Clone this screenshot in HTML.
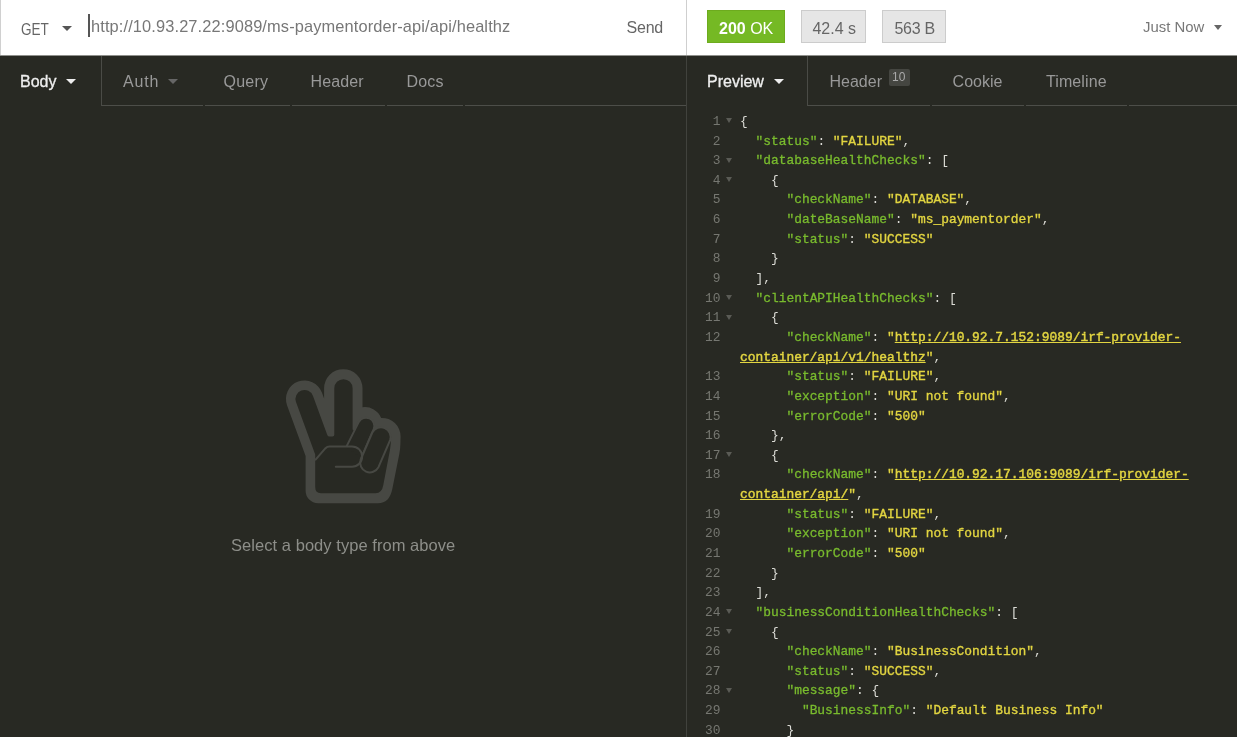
<!DOCTYPE html>
<html lang="en">
<head>
<meta charset="utf-8">
<title>Insomnia</title>
<style>
*{box-sizing:border-box;margin:0;padding:0}
html,body{width:1237px;height:737px;overflow:hidden;background:#282923;font-family:"Liberation Sans",sans-serif}
.abs{position:absolute}
#top{position:absolute;left:0;top:0;width:1237px;height:55px;background:#fff}
#topline{position:absolute;left:0;top:55px;width:1237px;height:1px;background:#8f908c}
#leftedge{position:absolute;left:0;top:0;width:1px;height:55px;background:#d0d0d0}
#vdiv1{position:absolute;left:686px;top:0;width:1px;height:55px;background:#cfcfcf}
#vdiv2{position:absolute;left:686px;top:56px;width:1px;height:681px;background:#41423d}
.t{position:absolute;white-space:nowrap;line-height:1;transform-origin:0 0;filter:blur(.4px)}
.caret{position:absolute;width:0;height:0;border-left:5px solid transparent;border-right:5px solid transparent;border-top:5.5px solid #555}
.tabline{position:absolute;height:1px;background:#4d4e49;top:104.5px}
.badge{position:absolute;top:10px;height:32px}
.gb{background:#e6e6e6;border:1px solid #cccccc;height:32.5px}
/* code */
#code{filter:blur(.4px);position:absolute;left:687px;top:111.9px;width:550px;font-family:"Liberation Mono",monospace;font-size:12.9px;color:#e0e0dc}
.row{position:relative;height:19.655px;line-height:19.655px;white-space:pre}
.ln{position:absolute;left:0;width:33.5px;text-align:right;color:#767771}
.fold{position:absolute;left:39px;top:6.5px;width:0;height:0;border-left:3px solid transparent;border-right:3px solid transparent;border-top:5px solid #5a5b55}
.tx{position:absolute;left:53px}
.k{color:#79bb2e;-webkit-text-stroke:.3px #79bb2e}
.s{color:#e2d541;-webkit-text-stroke:.35px #e2d541}
.u{color:#e2d541;text-decoration:underline;-webkit-text-stroke:.45px #e2d541}
.p{color:#dcdcd6}
</style>
</head>
<body>
<div id="top"></div>
<div id="topline"></div>
<div id="leftedge"></div>
<div id="vdiv1"></div>
<div id="vdiv2"></div>

<!-- URL bar -->
<div class="t" id="get" style="left:20.5px;top:20.5px;font-size:16.5px;color:#666;transform:scaleX(.82)">GET</div>
<div class="caret" style="left:61.5px;top:25.5px"></div>
<div class="abs" style="left:88px;top:14px;width:2px;height:23px;background:#555"></div>
<div class="t" id="url" style="left:91px;top:17.5px;font-size:16.4px;letter-spacing:.12px;color:#777">http://10.93.27.22:9089/ms-paymentorder-api/api/healthz</div>
<div class="t" id="send" style="left:626.5px;top:20px;letter-spacing:-.2px;font-size:16px;color:#666">Send</div>

<!-- response bar -->
<div class="badge" style="left:707px;width:78px;height:33px;background:#75b924;border:1px solid #6dab1e"></div>
<div class="t" id="ok" style="left:719px;top:20.5px;font-size:16px;color:#fff"><b>200</b> OK</div>
<div class="badge gb" style="left:801px;width:65px"></div>
<div class="t" id="time" style="left:812.4px;top:20.5px;font-size:16px;color:#666">42.4 s</div>
<div class="badge gb" style="left:882px;width:64px"></div>
<div class="t" id="size" style="left:894.5px;top:20.5px;letter-spacing:-.3px;font-size:16px;color:#666">563 B</div>
<div class="t" id="just" style="left:1143px;top:20px;font-size:14.9px;color:#777">Just Now</div>
<div class="caret" style="left:1214px;top:24.5px;border-left-width:4.5px;border-right-width:4.5px;border-top-color:#666"></div>

<!-- left tabs -->
<div class="abs" style="left:101.3px;top:56px;width:1px;height:49.5px;background:#4a4b46"></div>
<div class="tabline" style="left:102px;width:101px"></div>
<div class="tabline" style="left:205px;width:85px"></div>
<div class="tabline" style="left:292px;width:93px"></div>
<div class="tabline" style="left:387px;width:76px"></div>
<div class="tabline" style="left:465px;width:221px"></div>
<div class="t" id="tbody" style="-webkit-text-stroke:.3px #eee;left:20px;top:74px;font-size:16px;color:#eee">Body</div>
<div class="caret" style="left:66px;top:78.5px;border-top-color:#eee"></div>
<div class="t" id="tauth" style="left:123px;top:73.7px;letter-spacing:.8px;font-size:16px;color:#999">Auth</div>
<div class="caret" style="left:167.5px;top:78.5px;border-top-color:#666"></div>
<div class="t" id="tquery" style="left:223.6px;top:73.7px;letter-spacing:.2px;font-size:16px;color:#999">Query</div>
<div class="t" id="thead" style="left:310.5px;top:73.7px;letter-spacing:.1px;font-size:16px;color:#999">Header</div>
<div class="t" id="tdocs" style="left:406.4px;top:73.7px;letter-spacing:.2px;font-size:16px;color:#999">Docs</div>

<!-- right tabs -->
<div class="abs" style="left:807.4px;top:56px;width:1px;height:49.5px;background:#4a4b46"></div>
<div class="tabline" style="left:808px;width:122px"></div>
<div class="tabline" style="left:932px;width:92px"></div>
<div class="tabline" style="left:1026px;width:101px"></div>
<div class="tabline" style="left:1129px;width:108px"></div>
<div class="t" id="tprev" style="-webkit-text-stroke:.3px #eee;left:707px;top:73.7px;font-size:16px;color:#eee">Preview</div>
<div class="caret" style="left:773.5px;top:78.5px;border-top-color:#eee"></div>
<div class="t" id="thead2" style="left:829.5px;top:73.7px;font-size:16px;color:#999">Header</div>
<div class="abs" style="left:888.5px;top:68.5px;width:21.5px;height:17.5px;background:#454641;border-radius:2px"></div>
<div class="t" id="t10" style="left:892px;top:71px;font-size:12px;color:#aaa">10</div>
<div class="t" id="tcook" style="left:952.6px;top:73.7px;font-size:16px;color:#999">Cookie</div>
<div class="t" id="ttime" style="left:1046px;top:73.7px;letter-spacing:.1px;font-size:16px;color:#999">Timeline</div>

<!-- empty body -->
<svg class="abs" style="left:270px;top:360px" width="150" height="150" viewBox="270 360 150 150">
<path fill="#474843" d="M305.6 456 L287.1 405.4 A18.5 18.5 0 0 1 321.9 392.6 L324.1 398.6 L324.1 388.3 A19.2 19.2 0 0 1 362.5 388.3 L362.5 407.3 A17.5 17.5 0 0 1 381.2 417.9 A18.6 18.6 0 0 1 400.6 436.5 L400.4 444 Q400.3 449 399.3 454 L392.3 489 Q389.5 503.2 378 503.2 L318 503.2 A12.4 12.4 0 0 1 305.6 490.8 Z"/>
<path fill="#282923" d="M296 402.1 A9 9 0 0 1 313 395.9 L327.3 435 Q327.9 436.6 329.5 436.6 L332.5 436.6 Q334.3 436.6 334.3 434.8 L334.3 388.3 A9.15 9.15 0 0 1 352.6 388.3 L352.6 429.5 L375 450 L385 440 L391.1 436.5 L390.8 443 L390 449.8 L383.3 485 Q382 493.2 375.5 493.2 L321 493.2 Q315.2 493.2 315.2 487 L315.2 454.5 Z"/>
<path fill="#282923" stroke="#474843" stroke-width="2" d="M346.3 446.9 L358.8 421.9 A8.3 8.3 0 0 1 373.8 428.9 L361.4 457.9"/>
<path fill="#282923" stroke="#474843" stroke-width="2" d="M360.7 459.5 L372.3 432.5 A9.7 9.7 0 0 1 390.1 440.1 L378.5 467.1 A9.7 9.7 0 0 1 360.7 459.5 Z"/>
<path fill="none" stroke="#474843" stroke-width="2" stroke-linecap="round" d="M315.6 459.6 L325.5 448.2 Q327.2 446.4 329.5 446.4 L352 446.4 A10.15 10.15 0 0 1 352 466.7 L335.8 466.7"/>
</svg>
<div class="t" id="sel" style="left:231px;top:536.5px;font-size:16.5px;letter-spacing:.05px;color:#8d8e89">Select a body type from above</div>

<div id="code">
<div class="row"><span class="ln">1</span><i class="fold"></i><span class="tx"><span class="p">{</span></span></div>
<div class="row"><span class="ln">2</span><span class="tx">  <span class="k">"status"</span><span class="p">: </span><span class="s">"FAILURE"</span><span class="p">,</span></span></div>
<div class="row"><span class="ln">3</span><i class="fold"></i><span class="tx">  <span class="k">"databaseHealthChecks"</span><span class="p">: [</span></span></div>
<div class="row"><span class="ln">4</span><i class="fold"></i><span class="tx">    <span class="p">{</span></span></div>
<div class="row"><span class="ln">5</span><span class="tx">      <span class="k">"checkName"</span><span class="p">: </span><span class="s">"DATABASE"</span><span class="p">,</span></span></div>
<div class="row"><span class="ln">6</span><span class="tx">      <span class="k">"dateBaseName"</span><span class="p">: </span><span class="s">"ms_paymentorder"</span><span class="p">,</span></span></div>
<div class="row"><span class="ln">7</span><span class="tx">      <span class="k">"status"</span><span class="p">: </span><span class="s">"SUCCESS"</span></span></div>
<div class="row"><span class="ln">8</span><span class="tx">    <span class="p">}</span></span></div>
<div class="row"><span class="ln">9</span><span class="tx">  <span class="p">],</span></span></div>
<div class="row"><span class="ln">10</span><i class="fold"></i><span class="tx">  <span class="k">"clientAPIHealthChecks"</span><span class="p">: [</span></span></div>
<div class="row"><span class="ln">11</span><i class="fold"></i><span class="tx">    <span class="p">{</span></span></div>
<div class="row"><span class="ln">12</span><span class="tx">      <span class="k">"checkName"</span><span class="p">: </span><span class="s">"</span><span class="u">http://10.92.7.152:9089/irf-provider-</span></span></div>
<div class="row"><span class="ln"></span><span class="tx"><span class="u">container/api/v1/healthz</span><span class="s">"</span><span class="p">,</span></span></div>
<div class="row"><span class="ln">13</span><span class="tx">      <span class="k">"status"</span><span class="p">: </span><span class="s">"FAILURE"</span><span class="p">,</span></span></div>
<div class="row"><span class="ln">14</span><span class="tx">      <span class="k">"exception"</span><span class="p">: </span><span class="s">"URI not found"</span><span class="p">,</span></span></div>
<div class="row"><span class="ln">15</span><span class="tx">      <span class="k">"errorCode"</span><span class="p">: </span><span class="s">"500"</span></span></div>
<div class="row"><span class="ln">16</span><span class="tx">    <span class="p">},</span></span></div>
<div class="row"><span class="ln">17</span><i class="fold"></i><span class="tx">    <span class="p">{</span></span></div>
<div class="row"><span class="ln">18</span><span class="tx">      <span class="k">"checkName"</span><span class="p">: </span><span class="s">"</span><span class="u">http://10.92.17.106:9089/irf-provider-</span></span></div>
<div class="row"><span class="ln"></span><span class="tx"><span class="u">container/api/</span><span class="s">"</span><span class="p">,</span></span></div>
<div class="row"><span class="ln">19</span><span class="tx">      <span class="k">"status"</span><span class="p">: </span><span class="s">"FAILURE"</span><span class="p">,</span></span></div>
<div class="row"><span class="ln">20</span><span class="tx">      <span class="k">"exception"</span><span class="p">: </span><span class="s">"URI not found"</span><span class="p">,</span></span></div>
<div class="row"><span class="ln">21</span><span class="tx">      <span class="k">"errorCode"</span><span class="p">: </span><span class="s">"500"</span></span></div>
<div class="row"><span class="ln">22</span><span class="tx">    <span class="p">}</span></span></div>
<div class="row"><span class="ln">23</span><span class="tx">  <span class="p">],</span></span></div>
<div class="row"><span class="ln">24</span><i class="fold"></i><span class="tx">  <span class="k">"businessConditionHealthChecks"</span><span class="p">: [</span></span></div>
<div class="row"><span class="ln">25</span><i class="fold"></i><span class="tx">    <span class="p">{</span></span></div>
<div class="row"><span class="ln">26</span><span class="tx">      <span class="k">"checkName"</span><span class="p">: </span><span class="s">"BusinessCondition"</span><span class="p">,</span></span></div>
<div class="row"><span class="ln">27</span><span class="tx">      <span class="k">"status"</span><span class="p">: </span><span class="s">"SUCCESS"</span><span class="p">,</span></span></div>
<div class="row"><span class="ln">28</span><i class="fold"></i><span class="tx">      <span class="k">"message"</span><span class="p">: {</span></span></div>
<div class="row"><span class="ln">29</span><span class="tx">        <span class="k">"BusinessInfo"</span><span class="p">: </span><span class="s">"Default Business Info"</span></span></div>
<div class="row"><span class="ln">30</span><span class="tx">      <span class="p">}</span></span></div>
</div>
</body>
</html>
